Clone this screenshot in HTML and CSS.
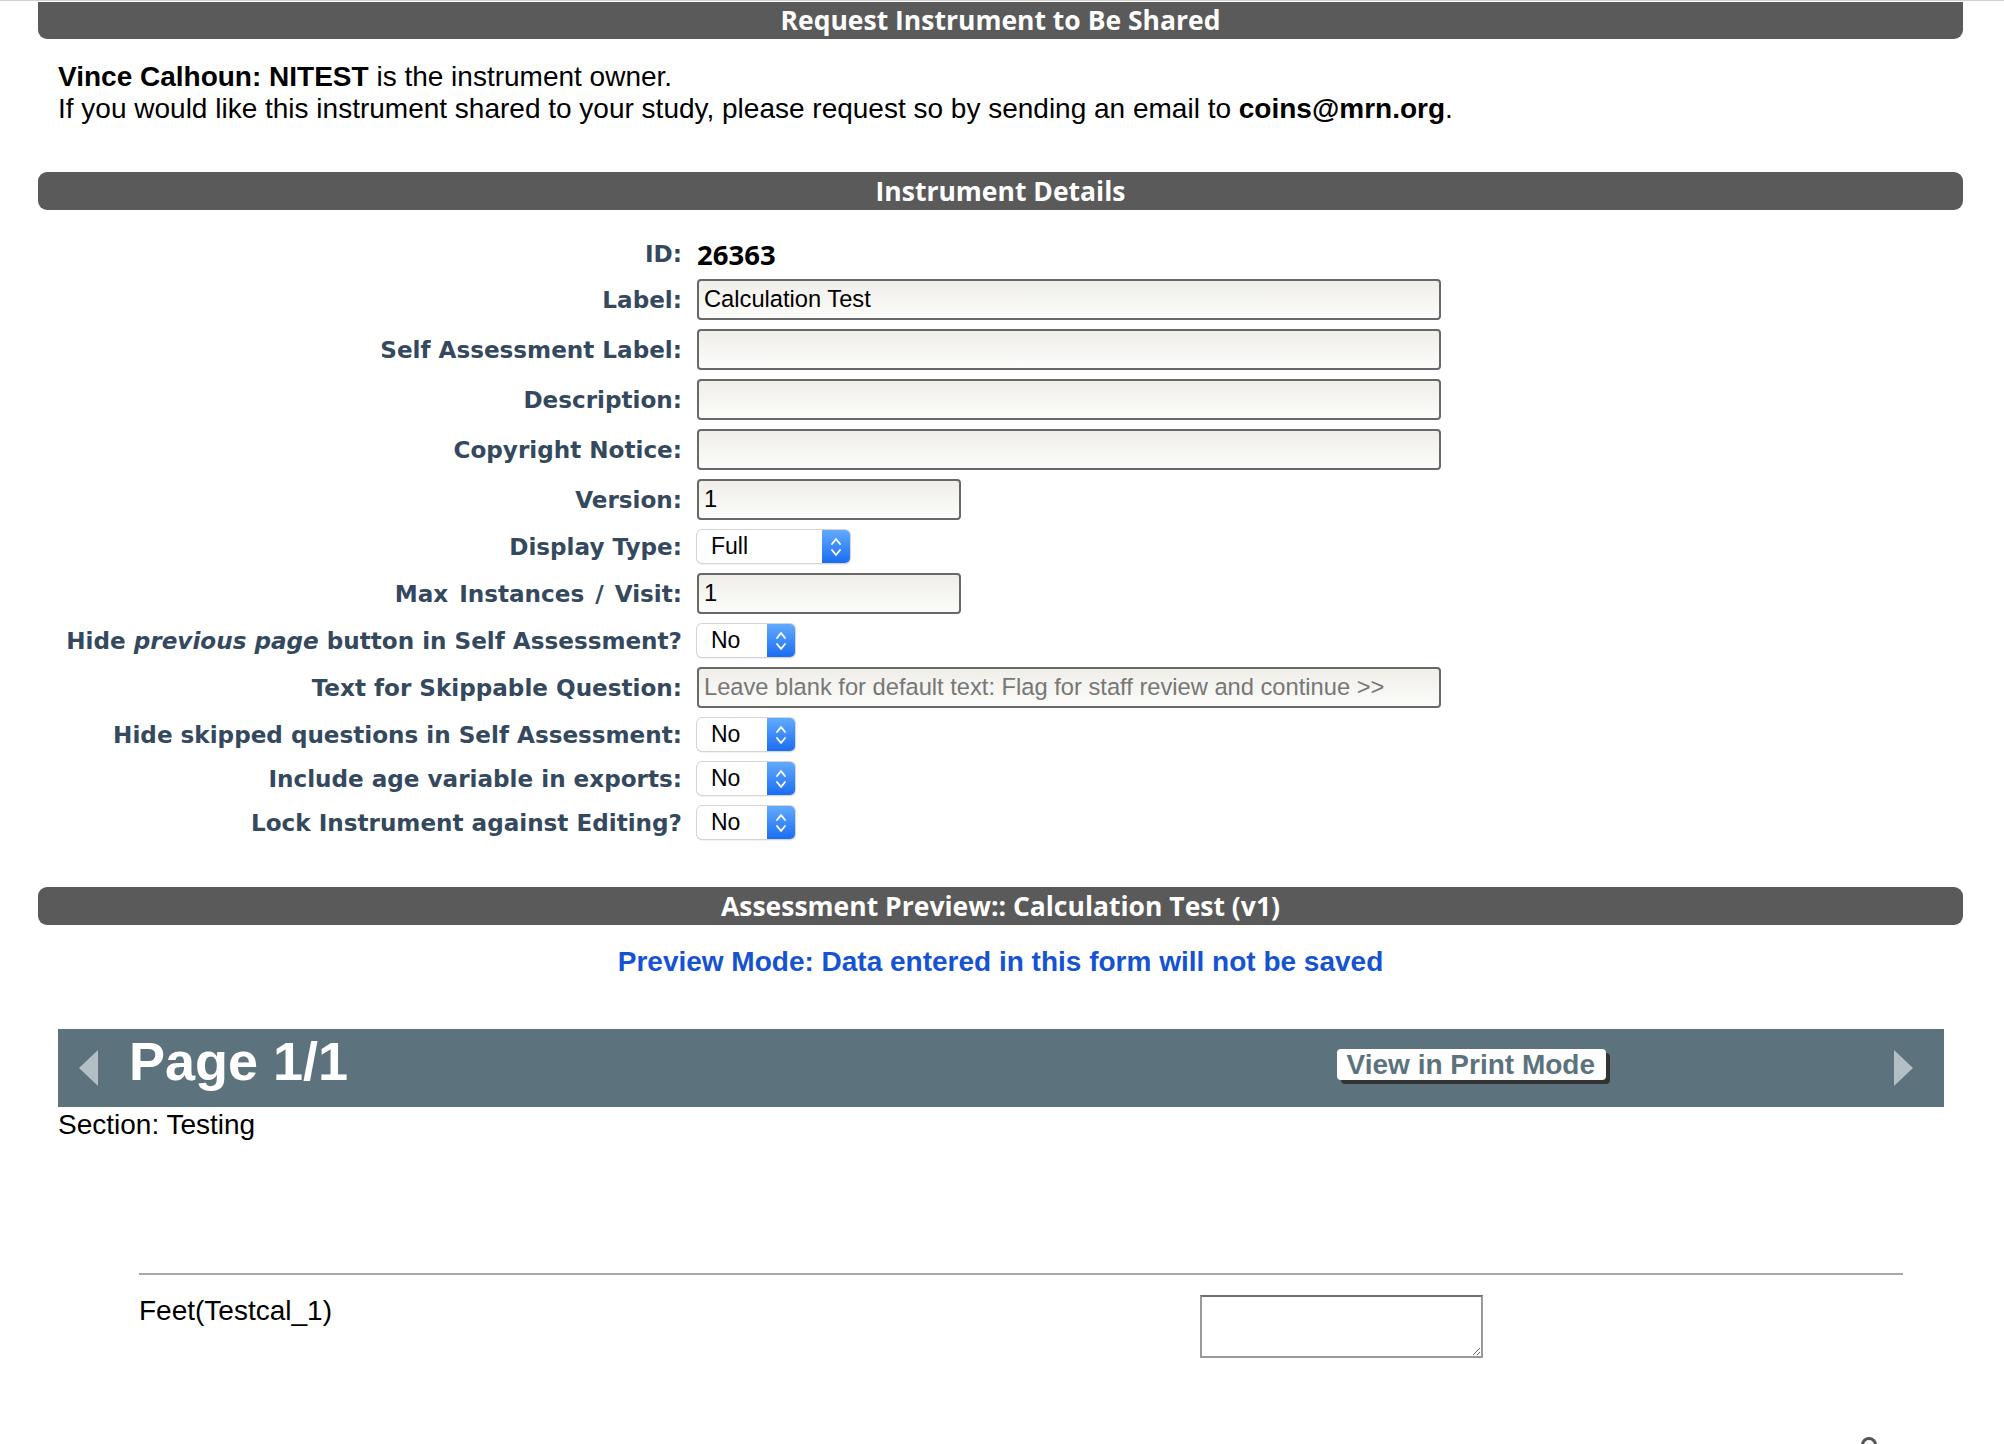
FILE: index.html
```html
<!DOCTYPE html>
<html lang="en">
<head>
<meta charset="utf-8">
<title>Instrument Details</title>
<link rel="stylesheet" href="styles.css">
</head>
<body>
<main class="panel">
  <h2 class="bar bar-cut">Request Instrument to Be Shared</h2>
  <p class="owner"><b>Vince Calhoun: NITEST</b> is the instrument owner.<br>If you would like this instrument shared to your study, please request so by sending an email to <b>coins@mrn.org</b>.</p>

  <h2 class="bar">Instrument Details</h2>
  <div class="form">
    <label class="lbl lbl-id">ID:</label>
    <div class="id">26363</div>

    <label class="lbl">Label:</label>
    <input class="field wide" type="text" value="Calculation Test">

    <label class="lbl">Self Assessment Label:</label>
    <input class="field wide" type="text" value="">

    <label class="lbl">Description:</label>
    <input class="field wide" type="text" value="">

    <label class="lbl">Copyright Notice:</label>
    <input class="field wide" type="text" value="">

    <label class="lbl">Version:</label>
    <input class="field short" type="text" value="1">

    <label class="lbl">Display Type:</label>
    <div class="select select-lg"><span class="val">Full</span><span class="step"><svg viewBox="0 0 14 26" width="14" height="26"><path d="M3 10 7 5 11 10M3 16 7 21 11 16" fill="none" stroke="#fff" stroke-width="1.9" stroke-linecap="round" stroke-linejoin="round"/></svg></span></div>

    <label class="lbl lbl-spaced">Max Instances / Visit:</label>
    <input class="field short" type="text" value="1">

    <label class="lbl">Hide <i>previous page</i> button in Self Assessment?</label>
    <div class="select"><span class="val">No</span><span class="step"><svg viewBox="0 0 14 26" width="14" height="26"><path d="M3 10 7 5 11 10M3 16 7 21 11 16" fill="none" stroke="#fff" stroke-width="1.9" stroke-linecap="round" stroke-linejoin="round"/></svg></span></div>

    <label class="lbl">Text for Skippable Question:</label>
    <input class="field wide" type="text" value="" placeholder="Leave blank for default text: Flag for staff review and continue >>">

    <label class="lbl">Hide skipped questions in Self Assessment:</label>
    <div class="select"><span class="val">No</span><span class="step"><svg viewBox="0 0 14 26" width="14" height="26"><path d="M3 10 7 5 11 10M3 16 7 21 11 16" fill="none" stroke="#fff" stroke-width="1.9" stroke-linecap="round" stroke-linejoin="round"/></svg></span></div>

    <label class="lbl">Include age variable in exports:</label>
    <div class="select"><span class="val">No</span><span class="step"><svg viewBox="0 0 14 26" width="14" height="26"><path d="M3 10 7 5 11 10M3 16 7 21 11 16" fill="none" stroke="#fff" stroke-width="1.9" stroke-linecap="round" stroke-linejoin="round"/></svg></span></div>

    <label class="lbl">Lock Instrument against Editing?</label>
    <div class="select"><span class="val">No</span><span class="step"><svg viewBox="0 0 14 26" width="14" height="26"><path d="M3 10 7 5 11 10M3 16 7 21 11 16" fill="none" stroke="#fff" stroke-width="1.9" stroke-linecap="round" stroke-linejoin="round"/></svg></span></div>
  </div>

  <h2 class="bar bar-preview">Assessment Preview:: Calculation Test (v1)</h2>
  <p class="preview">Preview Mode: Data entered in this form will not be saved</p>

  <section class="assessment">
    <div class="pagebar">
      <span class="arrow arrow-left"></span>
      <span class="pagetitle">Page 1/1</span>
      <span class="printbtn">View in Print Mode</span>
      <span class="arrow arrow-right"></span>
    </div>
    <div class="section">Section: Testing</div>
    <div class="question">
      <div class="qtext">Feet(Testcal_1)</div>
      <div class="qanswer"><textarea class="answer"></textarea></div>
    </div>
  </section>
</main>
<span class="help-dot"></span>
</body>
</html>
```

FILE: styles.css
```css
html, body {
  background: #fff;
}

body {
  margin: 0;
  border-top: 1px solid #cfcfcf;
  font-family: "Liberation Sans", Arial, sans-serif;
  color: #000;
  overflow: hidden;
}

.panel {
  padding: 1px 41px 0 38px;
}

/* dark section headers */
.bar {
  margin: 0;
  height: 38px;
  background: #5a5a5a;
  color: #fff;
  text-align: center;
  font: 700 26.5px/38px "Open Sans", "DejaVu Sans", sans-serif;
  border-radius: 9px;
}

.bar-cut {
  height: 37px;
  line-height: 36px;
  border-radius: 0 0 9px 9px;
}

.owner {
  margin: 22px 0 0 20px;
  font-size: 28px;
  line-height: 32px;
}

.owner + .bar {
  margin-top: 47px;
}

/* instrument details form */
.form {
  display: grid;
  grid-template-columns: 644px 1fr;
  column-gap: 15px;
  row-gap: 9px;
  align-items: center;
  justify-items: start;
  margin-top: 29px;
}

.lbl {
  justify-self: end;
  font: 700 23.1px/28px "DejaVu Sans", Verdana, sans-serif;
  color: #34495e;
  white-space: nowrap;
}

.lbl-spaced {
  word-spacing: 3px;
}

.lbl i {
  font-style: italic;
}

.lbl-id,
.id {
  line-height: 31px;
}

.id {
  font: 700 27.5px/31px "Open Sans", "DejaVu Sans", sans-serif;
  color: #000;
}

.field {
  box-sizing: border-box;
  height: 41px;
  margin: 0;
  padding: 0 5px;
  border: 2px solid #686868;
  border-radius: 4px;
  background: linear-gradient(#efeee9, #fcfcfa);
  font: 23.7px "Liberation Sans", Arial, sans-serif;
  color: #000;
  outline: none;
}

.field::placeholder {
  color: #777;
}

.wide {
  width: 744px;
}

.short {
  width: 264px;
}

/* native-looking popup buttons */
.select {
  display: flex;
  box-sizing: border-box;
  width: 98px;
  height: 33px;
  margin: 1px 0;
  border-radius: 5px;
  background: #fff;
  box-shadow: 0 0 0 1px #d4d4d4, 0 1px 2px rgba(0, 0, 0, 0.18);
  overflow: hidden;
}

.select-lg {
  width: 153px;
}

.select .val {
  flex: 1;
  padding-left: 14px;
  font: 23px/33px "Liberation Sans", Arial, sans-serif;
  color: #000;
}

.select .step {
  width: 28px;
  display: flex;
  align-items: center;
  justify-content: center;
  background: linear-gradient(#62abff, #1a6df3);
}

.bar-preview {
  margin-top: 47px;
}

.preview {
  margin: 22px 0 0;
  text-align: center;
  font: 700 28px/30px "Liberation Sans", Arial, sans-serif;
  color: #1553d3;
}

/* assessment preview */
.assessment {
  margin: 52px 19px 0 20px;
}

.pagebar {
  display: flex;
  align-items: center;
  height: 78px;
  padding: 0 31px 0 21px;
  background: #5c737e;
}

.arrow {
  width: 0;
  height: 0;
  border-top: 18px solid transparent;
  border-bottom: 18px solid transparent;
}

.arrow-left {
  border-right: 19px solid #b3bfc5;
}

.arrow-right {
  border-left: 19px solid #b3bfc5;
}

.pagetitle {
  margin-left: 31px;
  margin-top: -14px;
  font: 700 54px/60px "Liberation Sans", Arial, sans-serif;
  color: #fff;
}

.printbtn {
  margin-left: auto;
  margin-right: 288px;
  margin-bottom: 8px;
  padding: 0 11px 0 10px;
  height: 31px;
  border-radius: 4px;
  background: #fff;
  box-shadow: 4px 4px 0 #333;
  font: 700 28px/31px "Liberation Sans", Arial, sans-serif;
  color: #5c737e;
}

.section {
  padding-top: 2px;
  font-size: 28px;
  line-height: 32px;
}

.question {
  display: grid;
  grid-template-columns: 1061px 1fr;
  margin: 132px 41px 0 81px;
  padding-top: 20px;
  border-top: 2px solid #a8a8a8;
}

.qtext {
  font-size: 28px;
  line-height: 32px;
}

.answer {
  display: block;
  box-sizing: border-box;
  width: 283px;
  height: 63px;
  margin: 0;
  border: 2px solid #9a9a9a;
  border-top-color: #707070;
  background: #fff;
}

/* floating help button, mostly below the fold */
.help-dot {
  position: fixed;
  left: 1861px;
  top: 1437px;
  width: 10px;
  height: 10px;
  border: 3px solid #555;
  border-radius: 50%;
}
```
